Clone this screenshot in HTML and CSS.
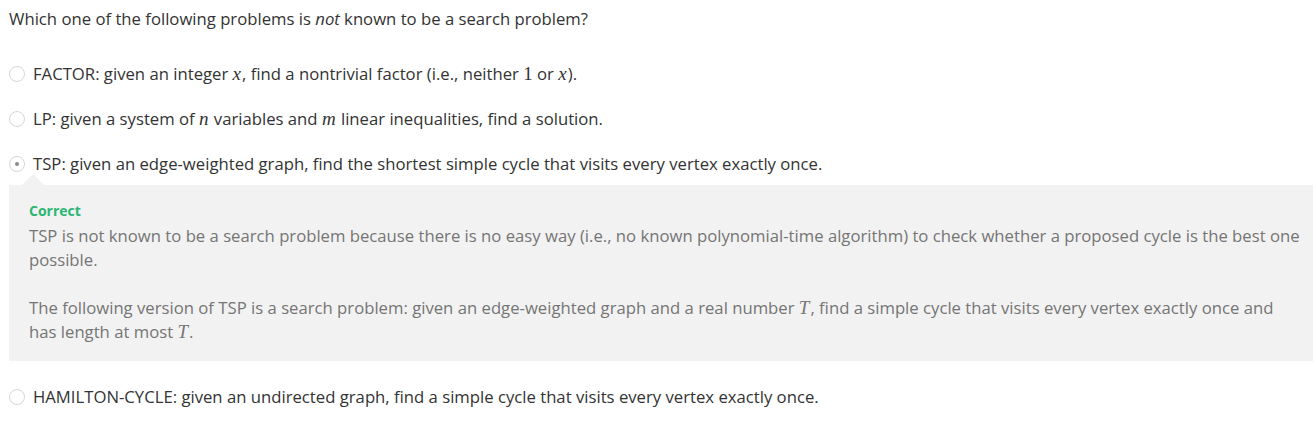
FILE: index.html
```html
<!DOCTYPE html>
<html>
<head>
<meta charset="utf-8">
<link rel="stylesheet" href="styles.css">
</head>
<body>
<div class="quiz">
  <div class="question">Which one of the following problems is <em>not</em> known to be a search problem?</div>
  <div class="options">
    <div class="option">
      <span class="radio"></span>
      <span class="label">FACTOR: given an integer <span class="math">x</span>, find a nontrivial factor (i.e., neither <span class="num">1</span> or <span class="math">x</span>).</span>
    </div>
    <div class="option">
      <span class="radio"></span>
      <span class="label">LP: given a system of <span class="math">n</span> variables and <span class="math">m</span> linear inequalities, find a solution.</span>
    </div>
    <div class="option selected">
      <span class="radio"><span class="dot"></span></span>
      <span class="label">TSP: given an edge-weighted graph, find the shortest simple cycle that visits every vertex exactly once.</span>
    </div>
    <div class="feedback">
      <div class="status">Correct</div>
      <p>TSP is not known to be a search problem because there is no easy way (i.e., no known polynomial-time algorithm) to check whether a proposed cycle is the best one possible.</p>
      <p>The following version of TSP is a search problem: given an edge-weighted graph and a real number <span class="math">T</span>, find a simple cycle that visits every vertex exactly once and has length at most <span class="math">T</span>.</p>
    </div>
    <div class="option last">
      <span class="radio"></span>
      <span class="label">HAMILTON-CYCLE: given an undirected graph, find a simple cycle that visits every vertex exactly once.</span>
    </div>
  </div>
</div>
</body>
</html>
```
FILE: styles.css
```css
html, body {
  margin: 0;
  padding: 0;
  background: #fff;
}
body {
  font-family: "Open Sans", "Liberation Sans", sans-serif;
  font-size: 16.7px;
  color: #333;
}
.quiz {
  padding: 7px 0 0 9px;
}
.question {
  line-height: 23px;
}
.options {
  margin-top: 32px;
  display: flex;
  flex-direction: column;
}
.option {
  display: flex;
  align-items: center;
  gap: 8px;
  line-height: 23px;
  margin-bottom: 22px;
}
.radio {
  width: 14px;
  height: 14px;
  border: 1px solid #d6d6d6;
  border-radius: 50%;
  display: flex;
  align-items: center;
  justify-content: center;
  flex: none;
}
.dot {
  width: 4px;
  height: 4px;
  border-radius: 50%;
  background: #8a8a8a;
}
.math, .num {
  font-family: "Liberation Serif", "Times New Roman", serif;
  font-size: 19px;
  line-height: 1;
}
.math {
  font-style: italic;
  padding-right: 1px;
}
.option.selected {
  margin-bottom: 10px;
}
.feedback {
  position: relative;
  background: #f2f2f2;
  padding: 16px 10px 17px 20px;
  color: #757575;
  line-height: 24px;
  margin-bottom: 24px;
}
.feedback::before {
  content: "";
  position: absolute;
  top: -11px;
  left: 13px;
  border-left: 11px solid transparent;
  border-right: 11px solid transparent;
  border-bottom: 11px solid #f2f2f2;
}
.status {
  color: #2bb673;
  font-weight: 700;
  font-size: 14px;
  line-height: 20px;
  margin-bottom: 3px;
}
.feedback p {
  margin: 0;
}
.feedback p + p {
  margin-top: 24px;
}
```
